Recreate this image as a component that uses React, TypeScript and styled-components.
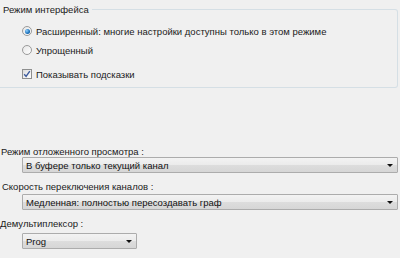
import React from "react";
import styled, { createGlobalStyle } from "styled-components";

const Global = createGlobalStyle`
  html, body { margin: 0; padding: 0; background: #f0f0f0; }
  body { font-family: "Liberation Sans", Arial, sans-serif; font-size: 9.5px; color: #1a1a1a; }
`;

const Page = styled.div`
  width: 400px;
  height: 258px;
  overflow: hidden;
  padding-top: 4px;
  box-sizing: border-box;
  display: flex;
  flex-direction: column;
`;

const GroupBox = styled.fieldset`
  margin: 0 2px 0 0;
  padding: 0;
  height: 84px;
  box-sizing: border-box;
  border: 1px solid #d5dfe5;
  border-left: none;
  border-radius: 0 3px 3px 0;
  display: flex;
  flex-direction: column;
`;

const Legend = styled.legend`
  padding: 0 3px;
  margin-left: 0;
  line-height: 11px;
  color: #1a1a1a;
`;

const Options = styled.div`
  display: flex;
  flex-direction: column;
  padding-left: 22px;
`;

const OptionRow = styled.label<{ $top: number }>`
  display: flex;
  align-items: center;
  gap: 4px;
  height: 12px;
  margin-top: ${(p) => p.$top}px;
  color: #1a1a1a;
`;

const RadioDot = styled.span<{ $on?: boolean }>`
  width: 10px;
  height: 10px;
  box-sizing: border-box;
  border-radius: 50%;
  border: 1px solid #9a9a9a;
  background: linear-gradient(135deg, #e6e6e6, #ffffff);
  display: flex;
  align-items: center;
  justify-content: center;
  &::after {
    content: "";
    display: ${(p) => (p.$on ? "block" : "none")};
    width: 5px;
    height: 5px;
    border-radius: 50%;
    background: radial-gradient(circle at 35% 35%, #8fd0ff, #1a6fb8 60%, #0d4f8c);
  }
`;

const CheckBox = styled.span`
  width: 10px;
  height: 10px;
  box-sizing: border-box;
  border: 1px solid #8e8f8f;
  background: linear-gradient(135deg, #dcdcdc, #ffffff);
  display: flex;
  align-items: center;
  justify-content: center;
`;

const Field = styled.div<{ $top: number }>`
  display: flex;
  flex-direction: column;
  margin-top: ${(p) => p.$top}px;
`;

const FieldLabel = styled.div<{ $indent?: number }>`
  line-height: 11px;
  height: 11px;
  padding-left: ${(p) => p.$indent ?? 0}px;
`;

const Combo = styled.div<{ $width: number; $gap: number }>`
  margin-left: 22px;
  margin-top: ${(p) => p.$gap}px;
  width: ${(p) => p.$width}px;
  height: 16px;
  box-sizing: border-box;
  border: 1px solid #acacac;
  border-radius: 1px;
  background: linear-gradient(#f3f3f3 0%, #ebebeb 50%, #dddddd 51%, #d6d6d6 100%);
  display: flex;
  align-items: center;
  justify-content: space-between;
  padding: 0 4px 0 3px;
  color: #111;
`;

const Arrow = styled.span`
  width: 0;
  height: 0;
  border-left: 3px solid transparent;
  border-right: 3px solid transparent;
  border-top: 3px solid #111;
  margin-top: 1px;
`;

export default function App() {
  return (
    <>
      <Global />
      <Page>
        <GroupBox>
          <Legend>Режим интерфейса</Legend>
          <Options>
            <OptionRow $top={10}>
              <RadioDot $on />
              <span>Расширенный: многие настройки доступны только в этом режиме</span>
            </OptionRow>
            <OptionRow $top={7}>
              <RadioDot />
              <span>Упрощенный</span>
            </OptionRow>
            <OptionRow $top={12}>
              <CheckBox>
                <svg width="8" height="8" viewBox="0 0 8 8">
                  <path d="M1.2 4.2 L3.1 6.4 L6.8 1.2" fill="none" stroke="#3b5a9c" strokeWidth="1.4" />
                </svg>
              </CheckBox>
              <span>Показывать подсказки</span>
            </OptionRow>
          </Options>
        </GroupBox>
        <Field $top={58}>
          <FieldLabel $indent={1}>Режим отложенного просмотра :</FieldLabel>
          <Combo $width={376} $gap={0}>
            <span>В буфере только текущий канал</span>
            <Arrow />
          </Combo>
        </Field>
        <Field $top={8}>
          <FieldLabel $indent={2}>Скорость переключения каналов :</FieldLabel>
          <Combo $width={376} $gap={2}>
            <span>Медленная: полностью пересоздавать граф</span>
            <Arrow />
          </Combo>
        </Field>
        <Field $top={8}>
          <FieldLabel>Демультиплексор :</FieldLabel>
          <Combo $width={115} $gap={4}>
            <span>Prog</span>
            <Arrow />
          </Combo>
        </Field>
      </Page>
    </>
  );
}
